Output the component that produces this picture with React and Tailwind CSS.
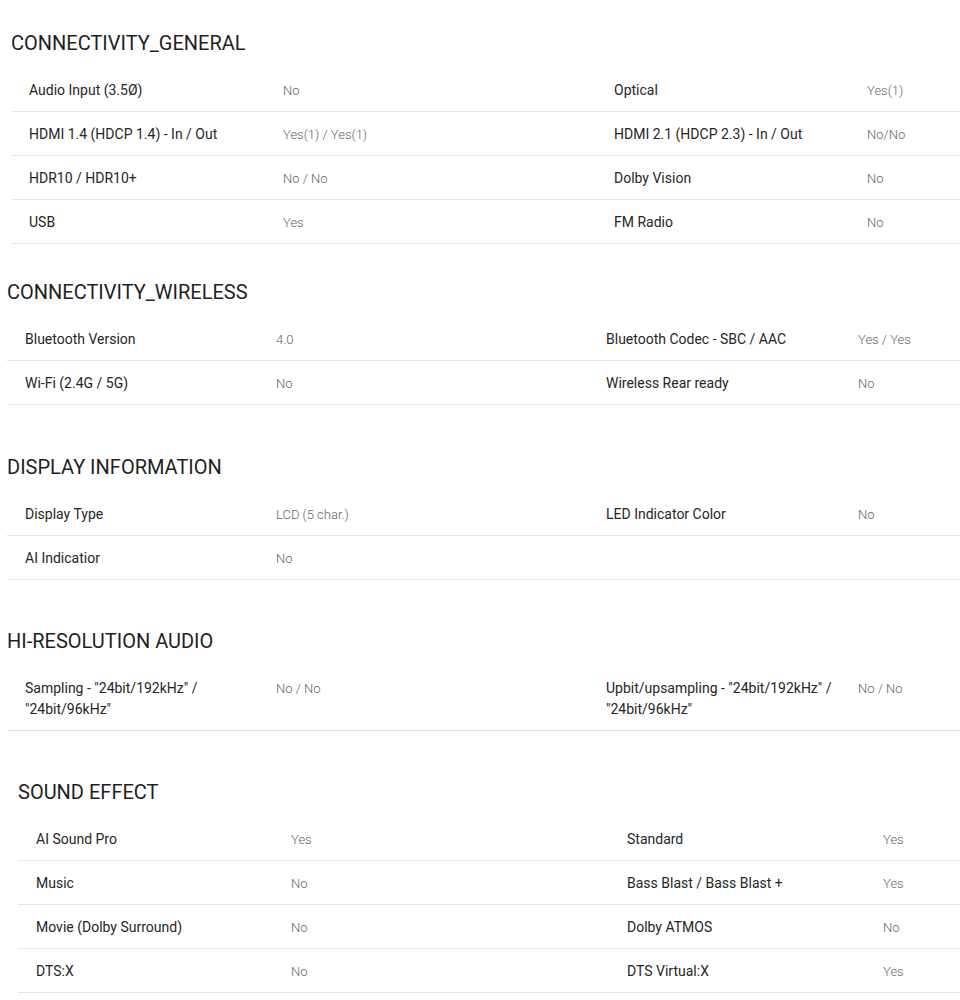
import React from "react";

const sections = [
  {
    title: "CONNECTIVITY_GENERAL",
    wrap: "mt-[31px] ml-[12px]",
    head: "-ml-[1px]",
    row: "pl-[17px] grid-cols-[254px_331px_253px_1fr]",
    items: [
      ["Audio Input (3.5Ø)", "No", "Optical", "Yes(1)"],
      ["HDMI 1.4 (HDCP 1.4) - In / Out", "Yes(1) / Yes(1)", "HDMI 2.1 (HDCP 2.3) - In / Out", "No/No"],
      ["HDR10 / HDR10+", "No / No", "Dolby Vision", "No"],
      ["USB", "Yes", "FM Radio", "No"],
    ],
  },
  {
    title: "CONNECTIVITY_WIRELESS",
    wrap: "mt-[36px] ml-[7px]",
    head: "",
    row: "pl-[18px] grid-cols-[251px_330px_252px_1fr]",
    items: [
      ["Bluetooth Version", "4.0", "Bluetooth Codec - SBC / AAC", "Yes / Yes"],
      ["Wi-Fi (2.4G / 5G)", "No", "Wireless Rear ready", "No"],
    ],
  },
  {
    title: "DISPLAY INFORMATION",
    wrap: "mt-[50px] ml-[7px]",
    head: "",
    row: "pl-[18px] grid-cols-[251px_330px_252px_1fr]",
    items: [
      ["Display Type", "LCD (5 char.)", "LED Indicator Color", "No"],
      ["AI Indicatior", "No", "", ""],
    ],
  },
  {
    title: "HI-RESOLUTION AUDIO",
    wrap: "mt-[49px] ml-[7px]",
    head: "",
    row: "pl-[18px] grid-cols-[251px_330px_252px_1fr]",
    tall: true,
    items: [
      [
        'Sampling - "24bit/192kHz" / "24bit/96kHz"',
        "No / No",
        'Upbit/upsampling - "24bit/192kHz" / "24bit/96kHz"',
        "No / No",
      ],
    ],
  },
  {
    title: "SOUND EFFECT",
    wrap: "mt-[49px] ml-[18px]",
    head: "",
    row: "pl-[18px] grid-cols-[255px_336px_256px_1fr]",
    items: [
      ["AI Sound Pro", "Yes", "Standard", "Yes"],
      ["Music", "No", "Bass Blast / Bass Blast +", "Yes"],
      ["Movie (Dolby Surround)", "No", "Dolby ATMOS", "No"],
      ["DTS:X", "No", "DTS Virtual:X", "Yes"],
    ],
  },
];

function SpecRow({ cols, tall, item }) {
  const [l1, v1, l2, v2] = item;
  const rowH = tall ? "pt-[12px] pb-[10px] items-start" : "h-[44px] pt-[2px] items-center";
  return (
    <div className={`grid border-b border-[#e4e4e4] ${cols} ${rowH}`}>
      <div className="pr-[40px] text-[14px] leading-[21px] font-normal text-[#262626]">{l1}</div>
      <div className="text-[13px] leading-[21px] font-light text-[#666]">{v1}</div>
      <div className="pr-[20px] text-[14px] leading-[21px] font-normal text-[#262626]">{l2}</div>
      <div className="text-[13px] leading-[21px] font-light text-[#666]">{v2}</div>
    </div>
  );
}

export default function App() {
  return (
    <div className="bg-white min-h-[1000px] pb-[10px] font-['Roboto',sans-serif]">
      {sections.map((s) => (
        <section key={s.title} className={s.wrap}>
          <h2 className={`text-[20px] leading-[24px] font-normal text-[#1f1f1f] mb-[13px] ${s.head}`}>
            {s.title}
          </h2>
          <div>
            {s.items.map((item, i) => (
              <SpecRow key={i} cols={s.row} tall={s.tall} item={item} />
            ))}
          </div>
        </section>
      ))}
    </div>
  );
}
